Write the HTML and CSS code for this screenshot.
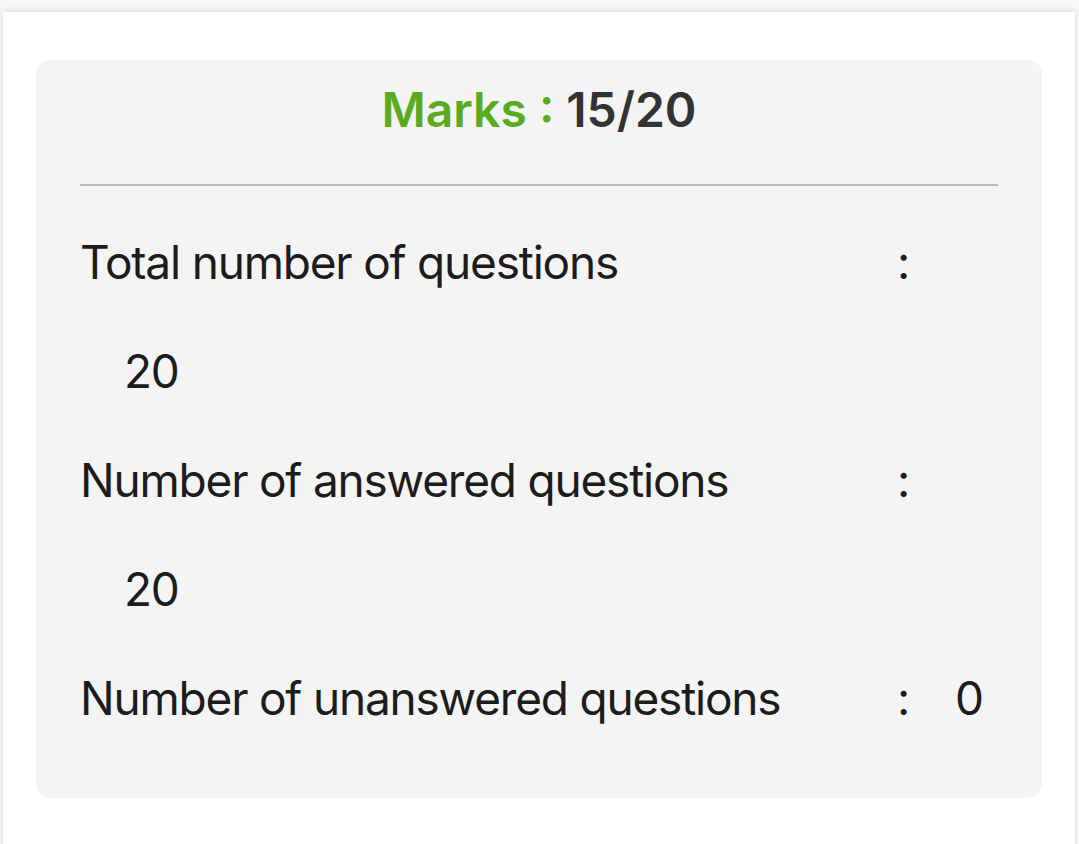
FILE: index.html
```html
<!DOCTYPE html>
<html lang="en">
<head>
<meta charset="utf-8">
<title>Marks</title>
<link rel="stylesheet" href="styles.css">
</head>
<body>
<div class="card">
  <div class="summary">
    <h2 class="title"><span class="title-label">Marks :</span> <span class="title-value">15/20</span></h2>
    <hr class="divider">
    <div class="stat stat-wrap">
      <span class="stat-label">Total number of questions</span>
      <span class="stat-colon">:</span>
      <span class="stat-value">20</span>
    </div>
    <div class="stat stat-wrap">
      <span class="stat-label">Number of answered questions</span>
      <span class="stat-colon">:</span>
      <span class="stat-value">20</span>
    </div>
    <div class="stat">
      <span class="stat-label">Number of unanswered questions</span>
      <span class="stat-colon">:</span>
      <span class="stat-value">0</span>
    </div>
  </div>
</div>
</body>
</html>
```

FILE: styles.css
```css
html, body {
  margin: 0;
  padding: 0;
  background: #f7f7f7;
}

body {
  font-family: Inter, "Noto Sans", sans-serif;
  color: #1c1c1c;
  height: 844px;
  overflow: hidden;
}

.card {
  margin: 12px 4px 0 3px;
  background: #ffffff;
  box-shadow: 0 0 8px rgba(0, 0, 0, 0.12);
  padding: 48px 33px 60px 33px;
}

.summary {
  background: #f4f4f4;
  border-radius: 14px;
  padding: 20px 44px 45px 44px;
}

.title {
  margin: 0;
  text-align: center;
  font-size: 48px;
  line-height: 60px;
  font-weight: 600;
}

.title-label {
  color: #5aab1e;
}

.title-value {
  color: #333333;
}

.divider {
  margin: 44px 0 0 0;
  border: 0;
  height: 2px;
  background: #bdbdbd;
}

.summary .divider + .stat {
  margin-top: 22px;
}

.stat {
  display: flex;
  flex-wrap: wrap;
  font-size: 46px;
  line-height: 109px;
  font-weight: 400;
  letter-spacing: -1.2px;
}

.stat-label {
  width: 817px;
}

.stat-colon {
  width: 58px;
}

.stat-wrap .stat-value {
  flex-basis: 100%;
  padding-left: 44px;
}
```
